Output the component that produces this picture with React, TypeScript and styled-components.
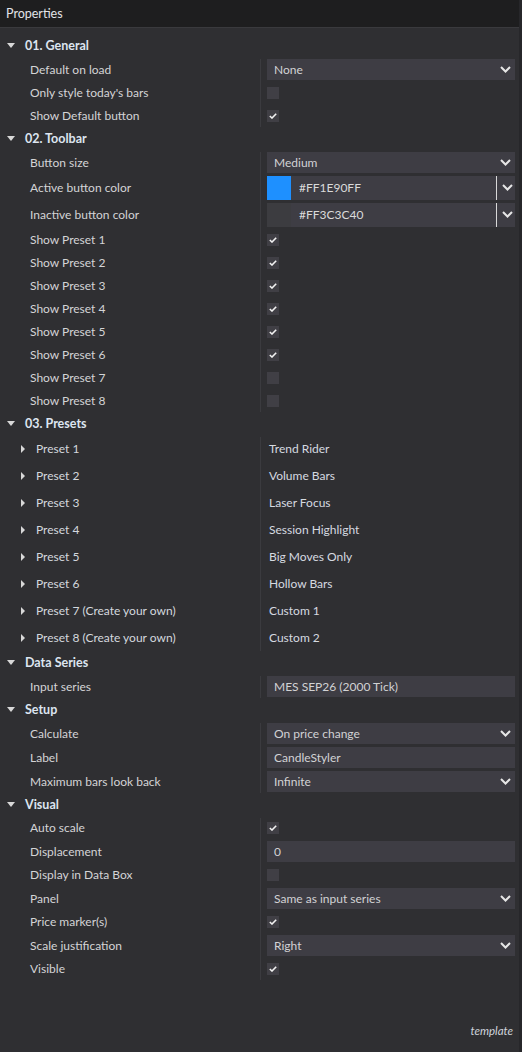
import styled, { createGlobalStyle } from "styled-components";

type Item =
  | { kind: "select"; label: string; value: string }
  | { kind: "text"; label: string; value: string }
  | { kind: "check"; label: string; checked: boolean }
  | { kind: "color"; label: string; value: string; swatch: string }
  | { kind: "preset"; label: string; value: string };

type Section = { title: string; items: Item[] };

const sections: Section[] = [
  {
    title: "01. General",
    items: [
      { kind: "select", label: "Default on load", value: "None" },
      { kind: "check", label: "Only style today's bars", checked: false },
      { kind: "check", label: "Show Default button", checked: true },
    ],
  },
  {
    title: "02. Toolbar",
    items: [
      { kind: "select", label: "Button size", value: "Medium" },
      { kind: "color", label: "Active button color", value: "#FF1E90FF", swatch: "#1e90ff" },
      { kind: "color", label: "Inactive button color", value: "#FF3C3C40", swatch: "#3c3c40" },
      { kind: "check", label: "Show Preset 1", checked: true },
      { kind: "check", label: "Show Preset 2", checked: true },
      { kind: "check", label: "Show Preset 3", checked: true },
      { kind: "check", label: "Show Preset 4", checked: true },
      { kind: "check", label: "Show Preset 5", checked: true },
      { kind: "check", label: "Show Preset 6", checked: true },
      { kind: "check", label: "Show Preset 7", checked: false },
      { kind: "check", label: "Show Preset 8", checked: false },
    ],
  },
  {
    title: "03. Presets",
    items: [
      { kind: "preset", label: "Preset 1", value: "Trend Rider" },
      { kind: "preset", label: "Preset 2", value: "Volume Bars" },
      { kind: "preset", label: "Preset 3", value: "Laser Focus" },
      { kind: "preset", label: "Preset 4", value: "Session Highlight" },
      { kind: "preset", label: "Preset 5", value: "Big Moves Only" },
      { kind: "preset", label: "Preset 6", value: "Hollow Bars" },
      { kind: "preset", label: "Preset 7 (Create your own)", value: "Custom 1" },
      { kind: "preset", label: "Preset 8 (Create your own)", value: "Custom 2" },
    ],
  },
  {
    title: "Data Series",
    items: [{ kind: "text", label: "Input series", value: "MES SEP26 (2000 Tick)" }],
  },
  {
    title: "Setup",
    items: [
      { kind: "select", label: "Calculate", value: "On price change" },
      { kind: "text", label: "Label", value: "CandleStyler" },
      { kind: "select", label: "Maximum bars look back", value: "Infinite" },
    ],
  },
  {
    title: "Visual",
    items: [
      { kind: "check", label: "Auto scale", checked: true },
      { kind: "text", label: "Displacement", value: "0" },
      { kind: "check", label: "Display in Data Box", checked: false },
      { kind: "select", label: "Panel", value: "Same as input series" },
      { kind: "check", label: "Price marker(s)", checked: true },
      { kind: "select", label: "Scale justification", value: "Right" },
      { kind: "check", label: "Visible", checked: true },
    ],
  },
];

const rowHeight: Record<Item["kind"], number> = {
  select: 24,
  text: 24,
  check: 23,
  color: 27,
  preset: 27,
};

function Chevron() {
  return (
    <svg width="11" height="7" viewBox="0 0 11 7">
      <polyline points="1,1 5.5,5.5 10,1" fill="none" stroke="#e6e6e6" strokeWidth="2" />
    </svg>
  );
}

function Check() {
  return (
    <svg width="8" height="6" viewBox="0 0 8 6">
      <polyline points="0.8,3 3,5 7.2,0.8" fill="none" stroke="#f2f2f2" strokeWidth="1.6" />
    </svg>
  );
}

function Value({ item }: { item: Item }) {
  switch (item.kind) {
    case "select":
      return (
        <Field>
          <span>{item.value}</span>
          <Chevron />
        </Field>
      );
    case "text":
      return <Field>{item.value}</Field>;
    case "check":
      return <CheckBox>{item.checked && <Check />}</CheckBox>;
    case "color":
      return (
        <ColorField>
          <Swatch $color={item.swatch} />
          <ColorText>{item.value}</ColorText>
          <ColorButton>
            <Chevron />
          </ColorButton>
        </ColorField>
      );
    case "preset":
      return <PresetValue>{item.value}</PresetValue>;
  }
}

export default function App() {
  return (
    <>
      <GlobalStyle />
      <Panel>
        <Header>Properties</Header>
        <Body>
          {sections.map((s) => (
            <div key={s.title}>
              <CategoryRow>
                <Caret />
                {s.title}
              </CategoryRow>
              <Items>
                {s.items.map((it) => (
                  <Row key={it.label} $h={rowHeight[it.kind]}>
                    {it.kind === "preset" ? (
                      <PresetLabel>
                        <SmallCaret />
                        {it.label}
                      </PresetLabel>
                    ) : (
                      <Label>{it.label}</Label>
                    )}
                    <ValueCell>
                      <Value item={it} />
                    </ValueCell>
                  </Row>
                ))}
              </Items>
            </div>
          ))}
        </Body>
        <Footer>template</Footer>
      </Panel>
    </>
  );
}

const GlobalStyle = createGlobalStyle`
  html, body {
    margin: 0;
    padding: 0;
    background: #2f2f32;
  }
  body {
    font-family: Lato, "Noto Sans", sans-serif;
    font-size: 12px;
    color: #d6d6d6;
  }
`;

const Panel = styled.div`
  width: 522px;
  height: 1052px;
  display: flex;
  flex-direction: column;
  background: #2f2f32;
  border-right: 3px solid #27272a;
  box-sizing: border-box;
`;

const Header = styled.div`
  height: 27px;
  flex: none;
  display: flex;
  align-items: center;
  padding-left: 6px;
  background: #1e1e1f;
  border-bottom: 1px solid #3a3a3d;
  color: #e2e4e8;
  font-size: 12.5px;
`;

const Body = styled.div`
  flex: 1;
  padding-top: 6px;
`;

const CategoryRow = styled.div`
  height: 23px;
  display: flex;
  align-items: center;
  font-weight: 700;
  font-size: 12.5px;
  color: #dde5f0;
`;

const Caret = styled.span`
  width: 0;
  height: 0;
  margin: 0 10px 0 7px;
  border-left: 4px solid transparent;
  border-right: 4px solid transparent;
  border-top: 5px solid #d8d8d8;
`;

const SmallCaret = styled.span`
  width: 0;
  height: 0;
  margin: 0 11px 0 21px;
  border-top: 4px solid transparent;
  border-bottom: 4px solid transparent;
  border-left: 4px solid #d8d8d8;
`;

const Items = styled.div`
  position: relative;
  &::after {
    content: "";
    position: absolute;
    left: 260px;
    top: 2px;
    bottom: 0;
    width: 1px;
    background: #3b3b3f;
  }
`;

const Row = styled.div<{ $h: number }>`
  height: ${(p) => p.$h}px;
  display: grid;
  grid-template-columns: 267px 248px;
  align-items: center;
`;

const Label = styled.div`
  padding-left: 30px;
  color: #d4d4d6;
  white-space: nowrap;
`;

const PresetLabel = styled.div`
  display: flex;
  align-items: center;
  color: #d4d8de;
  white-space: nowrap;
`;

const ValueCell = styled.div`
  display: flex;
  align-items: center;
`;

const Field = styled.div`
  flex: 1;
  height: 21px;
  display: flex;
  align-items: center;
  justify-content: space-between;
  padding: 0 4px 0 7px;
  background: #3e3d44;
  color: #d2d2d4;
  box-sizing: border-box;
`;

const CheckBox = styled.div`
  width: 12px;
  height: 12px;
  display: flex;
  align-items: center;
  justify-content: center;
  background: #403f45;
`;

const ColorField = styled.div`
  flex: 1;
  height: 24px;
  display: flex;
  align-items: center;
  background: #3e3d44;
`;

const Swatch = styled.div<{ $color: string }>`
  width: 24px;
  height: 24px;
  background: ${(p) => p.$color};
`;

const ColorText = styled.div`
  flex: 1;
  padding-left: 8px;
  color: #dadada;
`;

const ColorButton = styled.div`
  width: 19px;
  height: 24px;
  display: flex;
  align-items: center;
  justify-content: center;
  border-left: 1px solid #d8d8d8;
  box-sizing: border-box;
  padding-left: 2px;
`;

const PresetValue = styled.div`
  padding-left: 2px;
  color: #d6dae0;
`;

const Footer = styled.div`
  height: 28px;
  display: flex;
  align-items: flex-start;
  justify-content: flex-end;
  padding-right: 6px;
  font-style: italic;
  font-size: 11.5px;
  color: #cfd4dc;
`;
